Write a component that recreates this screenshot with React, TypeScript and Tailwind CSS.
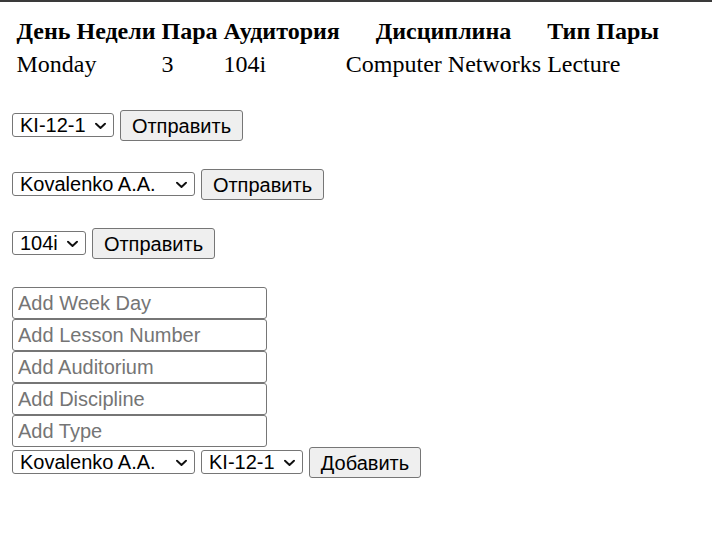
import React from "react";

const groups = ["KI-12-1"];
const teachers = ["Kovalenko A.A."];
const rooms = ["104i"];

const rows = [
  { day: "Monday", num: "3", room: "104i", discipline: "Computer Networks", type: "Lecture" },
];

function Chevron() {
  return (
    <svg
      className="pointer-events-none absolute right-[8px] top-1/2 -translate-y-1/2"
      width="11"
      height="7"
      viewBox="0 0 11 7"
      fill="none"
    >
      <path d="M1 1.2 L5.5 5.5 L10 1.2" stroke="#111" strokeWidth="1.9" strokeLinecap="round" strokeLinejoin="round" />
    </svg>
  );
}

function Select({ options, width }: { options: string[]; width: string }) {
  return (
    <div className={`relative ${width}`}>
      <select className="h-[24px] w-full appearance-none rounded-[3px] border-[1.5px] border-[#767676] bg-white pl-[7px] pr-[22px] text-[20px] leading-[20px] text-black outline-none">
        {options.map((o) => (
          <option key={o}>{o}</option>
        ))}
      </select>
      <Chevron />
    </div>
  );
}

function Button({ label, width }: { label: string; width: string }) {
  return (
    <button
      type="button"
      className={`h-[31px] ${width} rounded-[3px] border-[1.5px] border-[#767676] bg-[#efefef] text-center text-[20px] leading-[20px] text-black`}
    >
      {label}
    </button>
  );
}

function Field({ placeholder }: { placeholder: string }) {
  return (
    <input
      type="text"
      placeholder={placeholder}
      className="block h-[32px] w-[255px] rounded-[3px] border-[1.5px] border-[#767676] bg-white px-[5px] text-[20px] text-black placeholder:text-[#757575] outline-none"
    />
  );
}

export default function App() {
  return (
    <div className="min-h-[539px] border-t-2 border-[#3a3a3a] bg-white px-[12px] pt-[11px] text-black">
      <table className="border-separate border-spacing-[3px] font-['Liberation_Serif','Times_New_Roman',serif] text-[24px] leading-[27.5px]">
        <thead>
          <tr>
            <th className="p-[1.5px] text-center font-bold">День Недели</th>
            <th className="p-[1.5px] text-center font-bold">Пара</th>
            <th className="p-[1.5px] text-center font-bold">Аудитория</th>
            <th className="p-[1.5px] text-center font-bold">Дисциплина</th>
            <th className="p-[1.5px] text-center font-bold">Тип Пары</th>
          </tr>
        </thead>
        <tbody>
          {rows.map((r) => (
            <tr key={r.day + r.num}>
              <td className="p-[1.5px]">{r.day}</td>
              <td className="p-[1.5px]">{r.num}</td>
              <td className="p-[1.5px]">{r.room}</td>
              <td className="p-[1.5px]">{r.discipline}</td>
              <td className="p-[1.5px]">{r.type}</td>
            </tr>
          ))}
        </tbody>
      </table>

      <div className="font-['Liberation_Sans',Arial,sans-serif]">
        <form className="mt-[27px] flex items-center gap-[6px]">
          <Select options={groups} width="w-[102px]" />
          <Button label="Отправить" width="w-[123px]" />
        </form>

        <form className="mt-[28px] flex items-center gap-[6px]">
          <Select options={teachers} width="w-[183px]" />
          <Button label="Отправить" width="w-[123px]" />
        </form>

        <form className="mt-[28px] flex items-center gap-[6px]">
          <Select options={rooms} width="w-[74px]" />
          <Button label="Отправить" width="w-[123px]" />
        </form>

        <form className="mt-[28px]">
          <Field placeholder="Add Week Day" />
          <Field placeholder="Add Lesson Number" />
          <Field placeholder="Add Auditorium" />
          <Field placeholder="Add Discipline" />
          <Field placeholder="Add Type" />
          <div className="flex items-center gap-[6px]">
            <Select options={teachers} width="w-[183px]" />
            <Select options={groups} width="w-[102px]" />
            <Button label="Добавить" width="w-[112px]" />
          </div>
        </form>
      </div>
    </div>
  );
}
